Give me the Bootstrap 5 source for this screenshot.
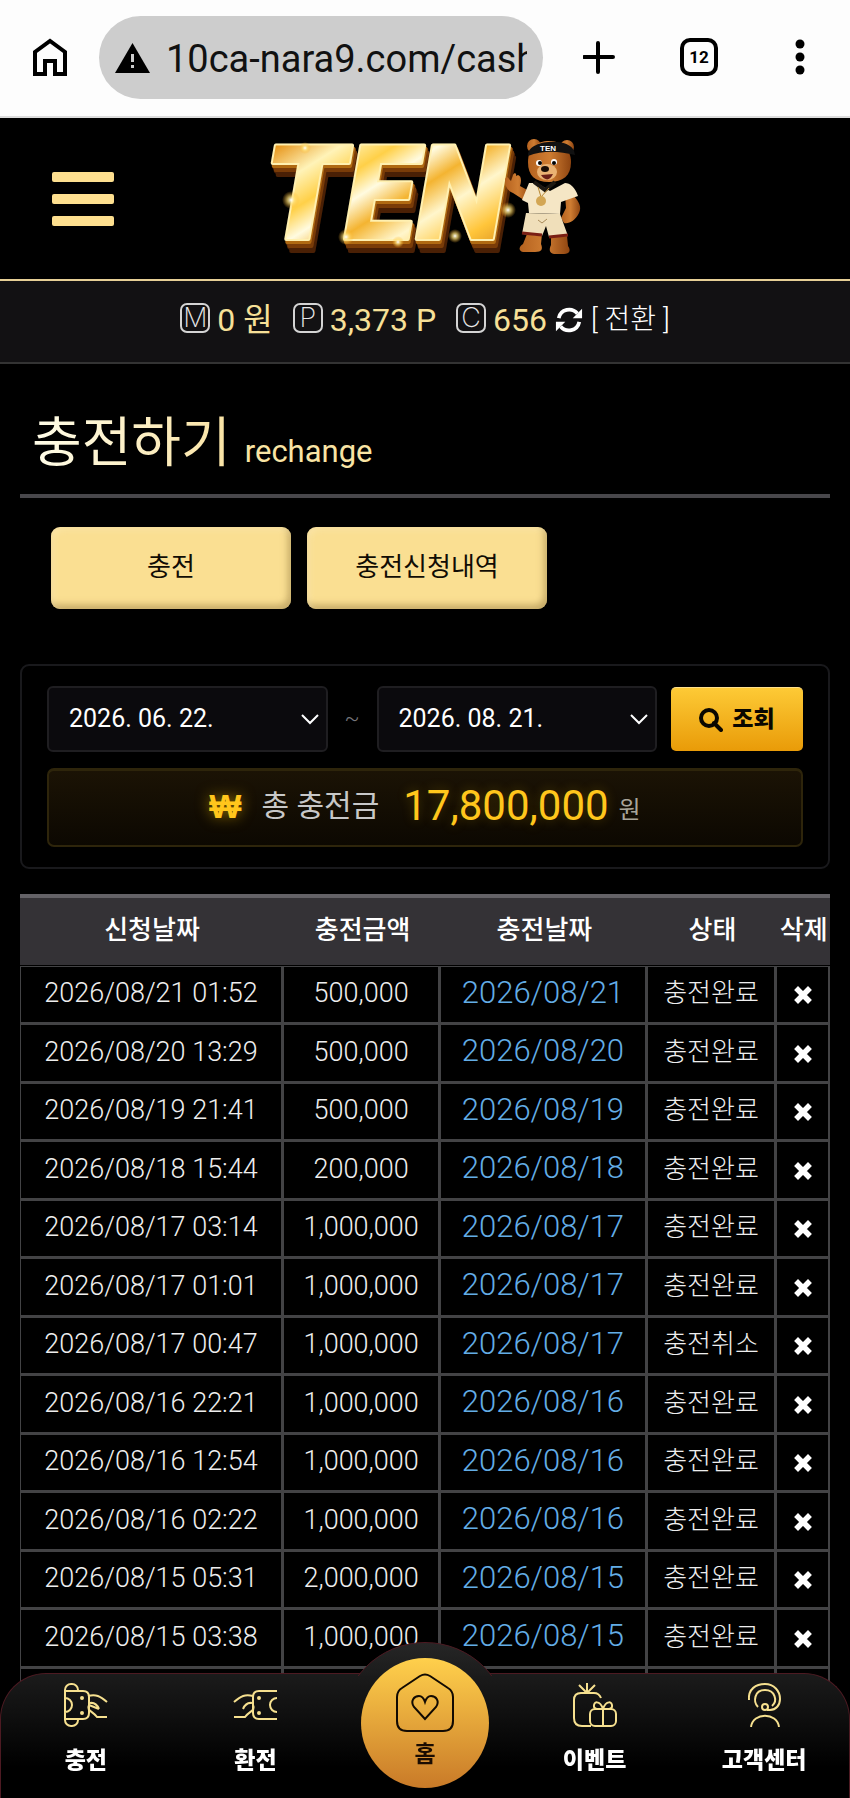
<!DOCTYPE html>
<html lang="ko">
<head>
<meta charset="utf-8">
<meta name="viewport" content="width=device-width, initial-scale=1">
<title>충전하기</title>
<link href="https://cdn.jsdelivr.net/npm/bootstrap@5.3.0/dist/css/bootstrap.min.css" rel="stylesheet">
<style>
  :root { --gold: #fadf92; --line: #434345; }
  body { background: #000; color: #fff; font-family: Roboto, "Noto Sans CJK KR", sans-serif; font-size: 26px; font-weight: 300; line-height: 32px; }
  button { font-family: inherit; }

  .browser-bar { background: #fdfdfd; border-bottom: 2px solid #ddd; height: 118px; padding: 16px 33px 18px; }
  .browser-bar button { color: #000; line-height: 0; }
  .url-pill { background: #cdcdcd; border-radius: 42px; height: 83px; width: 444px; margin-left: 32px; padding: 0 16px; gap: 16px; }
  .url-pill input { background: transparent; border: 0; outline: 0; padding: 2px 0 0; font-size: 38px; line-height: 48px; font-weight: 400; color: #111; flex: 1; min-width: 0; }

  .site-head { display: grid; grid-template-columns: 1fr auto 1fr; height: 163px; border-bottom: 2px solid #e6cf96; }
  .burger { width: 62px; margin-left: 52px; gap: 12px; }
  .burger span { height: 10px; border-radius: 2px; background: #fddf8f; }
  .logo-art { overflow: visible; }
  .logo-word { font: italic 900 132px Roboto, sans-serif; fill: url(#goldFace); stroke: #fff0b0; stroke-width: 4px; stroke-linejoin: round; paint-order: stroke;
    filter: drop-shadow(1px 3px 0 #b06a12) drop-shadow(2px 4px 0 #7a3c08) drop-shadow(2px 5px 0 #4a2005); }

  .wallet { background: #121113; border-bottom: 2px solid #333; height: 83px; padding: 21px 0 0; font-weight: 400; font-size: 32px; line-height: 36px; color: #f7e098; }
  .coin { width: 30px; height: 30px; border: 2px solid #d4d4d4; border-radius: 7px; color: #e8e8e8; font-family: Inter, sans-serif; font-weight: 200; font-size: 27px; line-height: 26px; text-align: center; margin: 0 7px 5px 0; }
  .amount { margin-right: 20px; }
  .swap { color: #fff; font-size: 28px; font-weight: 300; }

  .page { padding: 0 20px; }
  .page-title { border-bottom: 4px solid #48474b; padding: 48px 12px 18px; height: 134px; }
  .page-title h1 { font-size: 54px; line-height: 64px; font-weight: 400; margin: 0 14px 0 0; background: linear-gradient(90deg, #fffde9, #fae3a4); -webkit-background-clip: text; background-clip: text; color: transparent; }
  .page-title small { font-size: 31px; line-height: 36px; font-weight: 400; color: #f9e4a4; }
  .tabs { padding: 29px 31px 55px; gap: 16px; }
  .tab-btn { width: 240px; height: 82px; border: 0; border-radius: 9px; background: var(--gold); color: #100c04; font-size: 26px; font-weight: 400; padding-bottom: 4px;
    box-shadow: inset 3px 3px 6px #fff4d055, inset -3px -4px 7px #a88d50aa; }

  .search-card { border: 2px solid #19191c; border-radius: 9px; padding: 20px 25px; height: 205px; }
  .date-pick { background-color: #0b0a0d; border: 2px solid #1f1e21; border-radius: 6px; color: #fff; height: 66px; font-size: 25px; font-weight: 400; padding: 0 40px 0 20px; flex: 1;
    background-image: url("data:image/svg+xml,%3Csvg xmlns='http://www.w3.org/2000/svg' viewBox='0 0 18 18'%3E%3Cpath d='M1 5l8 8 8-8' fill='none' stroke='%23fff' stroke-width='2'/%3E%3C/svg%3E"); background-position: right 7px center; background-size: 18px 18px; }
  .tilde { width: 49px; color: #77777c; font-size: 22px; }
  .find-btn { width: 132px; height: 64px; margin-left: 14px; border: 0; border-top: 1px solid #ffe08a; border-radius: 5px; background: linear-gradient(#fdca36, #e99b08); color: #0a0700; font-size: 23px; font-weight: 900; gap: 9px; }
  .total { margin-top: 16px; height: 79px; border: 2px solid #2e250b; border-top-width: 3px; border-radius: 7px; background: linear-gradient(#1b1305, #0c0801); color: #c8c8c8; padding-bottom: 5px; font-size: 30px; font-weight: 400; }
  .total .won { color: #ffc61c; font-family: "Liberation Sans", sans-serif; font-weight: 700; font-size: 34px; text-shadow: 0 0 14px #c49600aa; margin-right: 20px; }
  .total output { color: #ffc61c; font-size: 42px; margin: 0 10px 0 24px; text-shadow: 0 0 12px #c4960055; }
  .total .unit { font-size: 24px; color: #a9a59b; padding-top: 8px; }

  .history { margin-top: 25px; table-layout: fixed; width: 100%; border-collapse: separate; border-spacing: 0; text-align: center; white-space: nowrap; }
  .history th { background: #343236; border-top: 4px solid #646267; height: 71px; padding: 0 0 4px; font-size: 26px; font-weight: 500; }
  .history td { border: solid var(--line); border-width: 0 3px 3px 0; height: 58px; padding: 0 0 3px; color: #eee; }
  .history td:nth-child(-n+2) { font-size: 27px; }
  .history tr:nth-child(odd) td { height: 59px; }
  .history tr.gap td { height: 2px; border-width: 0 0 1px; padding: 0 0 1px; }
  .history td:first-child { border-left-width: 1px; }
  .history td:last-child { border-right-width: 2px; }
  .history a { color: #63ade6; font-size: 31px; text-decoration: none; }
  .history button { padding: 0; border: 0; background: none; color: #fff; line-height: 0; vertical-align: middle; }

  .dock { height: 125px; border: 1px solid #4d1a22; border-bottom: 0; border-radius: 46px 46px 0 0; background: linear-gradient(#1b1b1b, #000 75%); }
  .dock-hump { position: absolute; left: 50%; bottom: 100%; margin: 0 0 -2px -84px; width: 168px; height: 34px; overflow: hidden; }
  .dock-hump::before { content: ""; display: block; height: 168px; border: 1px solid #4d1a22; border-radius: 50%; background: linear-gradient(#262626, #1b1b1b 20%); }
  .dock a { flex: 1 1 0; color: #fff; font-size: 23px; font-weight: 900; line-height: 30px; text-decoration: none; padding-top: 9px; gap: 19px; }
  .dock svg { stroke: #f6e08f; }
  .dock .home-link { position: relative; padding: 0; }
  .home-disc { position: absolute; left: 50%; bottom: 10px; margin-left: -64px; width: 128px; height: 130px; border-radius: 50%; background: linear-gradient(#ffd04c, #c97a28); color: #1a0c02; font-size: 23px; font-weight: 700; padding-top: 15px; gap: 7px; }
  .home-disc svg { stroke: #120a02; }
</style>
</head>
<body>

<header class="browser-bar d-flex align-items-start">
  <button class="btn p-0 border-0 align-self-center" aria-label="Home">
    <svg width="34" height="38" viewBox="0 0 34 38" fill="none" stroke="#000" stroke-width="4"><path d="M2 36V14L17 3l15 11v22H22V23H12v13z"/></svg>
  </button>
  <div class="url-pill d-flex align-items-center">
    <svg width="35" height="30" viewBox="0 0 35 30"><path d="M17.500 0L35 30H0z" fill="#000"/><path d="M17.500 11v8M17.500 22v3" stroke="#cdcdcd" stroke-width="3"/></svg>
    <input type="text" value="10ca-nara9.com/cash" aria-label="Address">
  </div>
  <div class="d-flex flex-fill justify-content-between align-self-center ps-4 ms-3">
    <button class="btn p-0 border-0" aria-label="New tab"><svg width="32" height="34" viewBox="0 0 32 34" stroke="#000" stroke-width="4" stroke-linecap="round"><path d="M15 3v29M1 17h29"/></svg></button>
    <button class="btn p-0 border-0" aria-label="Tabs"><svg width="38" height="38" viewBox="0 0 38 38"><rect x="2" y="2" width="34" height="34" rx="8" fill="none" stroke="#000" stroke-width="4"/><text x="19" y="25" text-anchor="middle" font-size="17" font-weight="700" font-family="Roboto">12</text></svg></button>
    <button class="btn p-0 border-0" aria-label="More"><svg width="34" height="36" viewBox="0 0 34 36"><circle cx="17" cy="5" r="4.500"/><circle cx="17" cy="18" r="4.500"/><circle cx="17" cy="31" r="4.500"/></svg></button>
  </div>
</header>

<div class="site-head align-items-center">
  <button class="burger btn p-0 border-0 d-flex flex-column" aria-label="메뉴"><span class="w-100"></span><span class="w-100"></span><span class="w-100"></span></button>
  <a href="#" aria-label="TEN" class="d-block lh-1">
  <svg class="logo-art" width="350" height="140" viewBox="0 0 350 140">
    <defs>
      <linearGradient id="goldFace" x1="0" y1="0" x2="1" y2="1">
        <stop offset="0" stop-color="#ffd95e"/><stop offset=".12" stop-color="#e7961c"/><stop offset=".25" stop-color="#fff3b8"/><stop offset=".36" stop-color="#ffd048"/><stop offset=".45" stop-color="#fffbe0"/><stop offset=".55" stop-color="#f4b431"/><stop offset=".66" stop-color="#fff6cc"/><stop offset=".8" stop-color="#ffc53a"/><stop offset="1" stop-color="#c06c10"/>
      </linearGradient>
      <radialGradient id="spark"><stop offset="0" stop-color="#fff"/><stop offset=".4" stop-color="#ffe27a" stop-opacity=".7"/><stop offset="1" stop-color="#ffb020" stop-opacity="0"/></radialGradient>
      <linearGradient id="fur" x1="0" x2="1"><stop offset="0" stop-color="#b5621f"/><stop offset=".5" stop-color="#cf7d32"/><stop offset="1" stop-color="#8f4511"/></linearGradient>
    </defs>
    <text class="logo-word" x="14" y="110">TEN</text>
    <g fill="url(#spark)"><circle cx="41" cy="71" r="9"/><circle cx="258" cy="81" r="8"/><circle cx="96" cy="108" r="8"/><circle cx="205" cy="107" r="7"/><circle cx="148" cy="113" r="6"/><circle cx="55" cy="19" r="6"/></g>
    <g fill="url(#fur)">
      <circle cx="284" cy="17" r="7"/><circle cx="317" cy="18" r="7"/>
      <path d="M278 33c0-14 9-21 21-21s22 8 22 21c0 14-8 20-22 20s-21-6-21-20z"/>
      <path d="M277 73l-14-9c-7-3-8-9-8-13 0-3 3-4 4-1l2 2 2-6c1-3 4-2 3 1l2-1c3 1 4 5 2 11l11 6z"/>
      <path d="M315 65l9 2c5 6 8 11 5 17-4 8-10 11-15 10l-3-5 5-10z"/>
      <path d="M277 105h15l-1 10c2 5 1 8-6 8h-12c-5-1-4-6 0-8zM301 107h16l1 10c3 4 2 8-4 8h-10c-5-1-5-5-3-9z"/>
    </g>
    <path d="M279 54l-7 17 6 3 1 10 31 1 1-12 17-6c-3-9-8-13-13-13l-15 8-13-8z" fill="#f5e6c5"/>
    <path d="M276 84l34 1 8 22-19 1-3-11-4 10-20-2z" fill="#f0dfba"/>
    <path d="M272 104l20 2M299 108l19-2" stroke="#7a1f14" stroke-width="3"/>
    <path d="M284 53l11 8 10-8" fill="none" stroke="#1d1812" stroke-width="4"/>
    <path d="M288 58l3 10 8-9" fill="none" stroke="#b78733"/><circle cx="291" cy="72" r="5" fill="#d3a654"/>
    <path d="M288 91l4 3 5-4" stroke="#a98b5a" fill="none"/>
    <path d="M278 26c0-16 42-18 46-4l1 4c-16-4-32-5-47 1z" fill="#111"/>
    <text x="290" y="22" font-size="8" font-weight="700" fill="#fff" font-family="Liberation Sans, sans-serif">TEN</text>
    <ellipse cx="297" cy="43" rx="10" ry="8" fill="#eab273"/><path d="M291 46c4 6 9 6 12-1z" fill="#6c2017"/>
    <ellipse cx="295" cy="40" rx="4" ry="3" fill="#1a0d06"/>
    <circle cx="289" cy="34" r="3" fill="#fff"/><circle cx="304" cy="33" r="3" fill="#fff"/><circle cx="290" cy="34" r="2"/><circle cx="304" cy="34" r="2"/>
  </svg>
  </a>
</div>

<div class="wallet d-flex justify-content-center align-items-start">
  <div class="d-flex align-items-center"><span class="coin">M</span><span class="amount">0 원</span></div>
  <div class="d-flex align-items-center"><span class="coin">P</span><span class="amount">3,373 P</span></div>
  <div class="d-flex align-items-center"><span class="coin">C</span><span>656</span></div>
  <button class="btn p-0 border-0 lh-1 mx-2 mt-1" aria-label="새로고침">
    <svg width="28" height="28" viewBox="0 0 30 30" fill="none" stroke="#fff" stroke-width="4"><path d="M4 13c2-10 14-12 20-5M26 17c-2 10-14 12-20 5"/><path d="M29 3v10H19zM1 27V17h10z" fill="#fff" stroke="none"/></svg>
  </button>
  <a href="#" class="swap text-decoration-none">[ 전환 ]</a>
</div>

<main class="page">
  <div class="page-title d-flex align-items-baseline"><h1>충전하기</h1><small>rechange</small></div>

  <div class="tabs d-flex">
    <button class="tab-btn">충전</button>
    <button class="tab-btn">충전신청내역</button>
  </div>

  <form class="search-card">
    <div class="d-flex align-items-center">
      <select class="form-select date-pick" aria-label="시작일"><option>2026. 06. 22.</option></select>
      <span class="tilde text-center">~</span>
      <select class="form-select date-pick" aria-label="종료일"><option>2026. 08. 21.</option></select>
      <button type="button" class="find-btn d-flex align-items-center justify-content-center">
        <svg width="24" height="24" viewBox="0 0 24 24" fill="none" stroke="#0a0700" stroke-width="4"><circle cx="10" cy="10" r="8"/><path d="M15 15l7 7" stroke-linecap="round"/></svg>조회
      </button>
    </div>
    <div class="total d-flex align-items-center justify-content-center">
      <span class="won">₩</span><span>총 충전금</span><output>17,800,000</output><span class="unit">원</span>
    </div>
  </form>

  <svg class="d-none"><symbol id="cross" viewBox="0 0 18 18"><path d="M4 4l10 10M14 4L4 14" stroke="#fff" stroke-width="5.500" stroke-linecap="square"/></symbol></svg>

  <table class="history">
    <colgroup><col style="width:32.6%"><col style="width:19.4%"><col style="width:25.5%"><col style="width:16%"><col></colgroup>
    <thead><tr><th>신청날짜</th><th>충전금액</th><th>충전날짜</th><th>상태</th><th>삭제</th></tr></thead>
    <tbody>
      <tr class="gap"><td colspan="5"></td></tr>
      <tr><td>2026/08/21 01:52</td><td>500,000</td><td><a href="#">2026/08/21</a></td><td>충전완료</td><td><button aria-label="삭제"><svg width="18" height="18"><use href="#cross"/></svg></button></td></tr>
      <tr><td>2026/08/20 13:29</td><td>500,000</td><td><a href="#">2026/08/20</a></td><td>충전완료</td><td><button aria-label="삭제"><svg width="18" height="18"><use href="#cross"/></svg></button></td></tr>
      <tr><td>2026/08/19 21:41</td><td>500,000</td><td><a href="#">2026/08/19</a></td><td>충전완료</td><td><button aria-label="삭제"><svg width="18" height="18"><use href="#cross"/></svg></button></td></tr>
      <tr><td>2026/08/18 15:44</td><td>200,000</td><td><a href="#">2026/08/18</a></td><td>충전완료</td><td><button aria-label="삭제"><svg width="18" height="18"><use href="#cross"/></svg></button></td></tr>
      <tr><td>2026/08/17 03:14</td><td>1,000,000</td><td><a href="#">2026/08/17</a></td><td>충전완료</td><td><button aria-label="삭제"><svg width="18" height="18"><use href="#cross"/></svg></button></td></tr>
      <tr><td>2026/08/17 01:01</td><td>1,000,000</td><td><a href="#">2026/08/17</a></td><td>충전완료</td><td><button aria-label="삭제"><svg width="18" height="18"><use href="#cross"/></svg></button></td></tr>
      <tr><td>2026/08/17 00:47</td><td>1,000,000</td><td><a href="#">2026/08/17</a></td><td>충전취소</td><td><button aria-label="삭제"><svg width="18" height="18"><use href="#cross"/></svg></button></td></tr>
      <tr><td>2026/08/16 22:21</td><td>1,000,000</td><td><a href="#">2026/08/16</a></td><td>충전완료</td><td><button aria-label="삭제"><svg width="18" height="18"><use href="#cross"/></svg></button></td></tr>
      <tr><td>2026/08/16 12:54</td><td>1,000,000</td><td><a href="#">2026/08/16</a></td><td>충전완료</td><td><button aria-label="삭제"><svg width="18" height="18"><use href="#cross"/></svg></button></td></tr>
      <tr><td>2026/08/16 02:22</td><td>1,000,000</td><td><a href="#">2026/08/16</a></td><td>충전완료</td><td><button aria-label="삭제"><svg width="18" height="18"><use href="#cross"/></svg></button></td></tr>
      <tr><td>2026/08/15 05:31</td><td>2,000,000</td><td><a href="#">2026/08/15</a></td><td>충전완료</td><td><button aria-label="삭제"><svg width="18" height="18"><use href="#cross"/></svg></button></td></tr>
      <tr><td>2026/08/15 03:38</td><td>1,000,000</td><td><a href="#">2026/08/15</a></td><td>충전완료</td><td><button aria-label="삭제"><svg width="18" height="18"><use href="#cross"/></svg></button></td></tr>
      <tr><td></td><td></td><td></td><td></td><td></td></tr>
    </tbody>
  </table>
</main>

<nav class="dock fixed-bottom d-flex">
  <div class="dock-hump"></div>
  <a href="#" class="d-flex flex-column align-items-center">
    <svg width="44" height="44" viewBox="0 0 44 44" fill="none" stroke-width="2"><path d="M1 8V7a6 6 0 0 1 6-6h1a6 6 0 0 1 6 6v1M1 36v1a6 6 0 0 0 6 6h1a6 6 0 0 0 6-6v-1M1 8v28M1 8h18q6 0 6 6v16q0 6-6 6H1M1 15a7 7 0 0 1 0 14"/><path d="M24 13c8-2 12 0 19 6M25 22l10 4M25 22c-3 6 4 6 8 12h10M26 20q6-1 9 6"/><circle cx="18" cy="15" r="1"/><circle cx="18" cy="30" r="1"/></svg>충전
  </a>
  <a href="#" class="d-flex flex-column align-items-center">
    <svg width="44" height="44" viewBox="0 0 44 44" fill="none" stroke-width="2"><path d="M44 8H26q-6 0-6 6v16q0 6 6 6h18M44 15a7 7 0 0 0 0 14"/><path d="M20 13c-8-2-12 0-19 6M19 20q-6-1-9 6M20 22c3 6-4 6-8 12H1M20 13v6"/><circle cx="26" cy="15" r="1"/><circle cx="26" cy="30" r="1"/></svg>환전
  </a>
  <a href="#" class="home-link">
    <span class="home-disc d-flex flex-column align-items-center">
      <svg width="58" height="60" viewBox="0 0 58 60" fill="none" stroke-width="2"><path d="M1 48V24q0-6 5-9L24 3q5-3 10 0l18 12q5 3 5 9v24q0 10-10 10H11Q1 58 1 48z"/><path d="M29 46L18 34c-4-6 0-11 5-11 3 0 5 3 6 6 1-3 3-6 6-6 5 0 9 5 5 11z"/></svg>홈
    </span>
  </a>
  <a href="#" class="d-flex flex-column align-items-center">
    <svg width="44" height="44" viewBox="0 0 44 44" fill="none" stroke-width="2"><path d="M18 43H9q-8 0-8-8V17q0-7 7-7h13q5 0 7 5M14 9V0M13 9L6 2M15 9l7-7"/><rect x="17" y="26" width="26" height="17" rx="5"/><path d="M30 26v17M30 26c-3-9-10-8-9-2q1 2 3 2M30 26c3-9 10-8 9-2q-1 2-3 2"/></svg>이벤트
  </a>
  <a href="#" class="d-flex flex-column align-items-center">
    <svg width="44" height="44" viewBox="0 0 44 44" fill="none" stroke-width="2"><path d="M7 17C6 6 14 1 23 1c9 0 15 7 15 15 0 6-4 11-10 11h-3"/><path d="M16 24c-5-5-4-17 7-17 10 0 13 11 7 16"/><circle cx="23" cy="24" r="3"/><path d="M9 44c2-15 26-15 28 0"/></svg>고객센터
  </a>
</nav>

<script src="https://cdn.jsdelivr.net/npm/bootstrap@5.3.0/dist/js/bootstrap.bundle.min.js"></script>
</body>
</html>
